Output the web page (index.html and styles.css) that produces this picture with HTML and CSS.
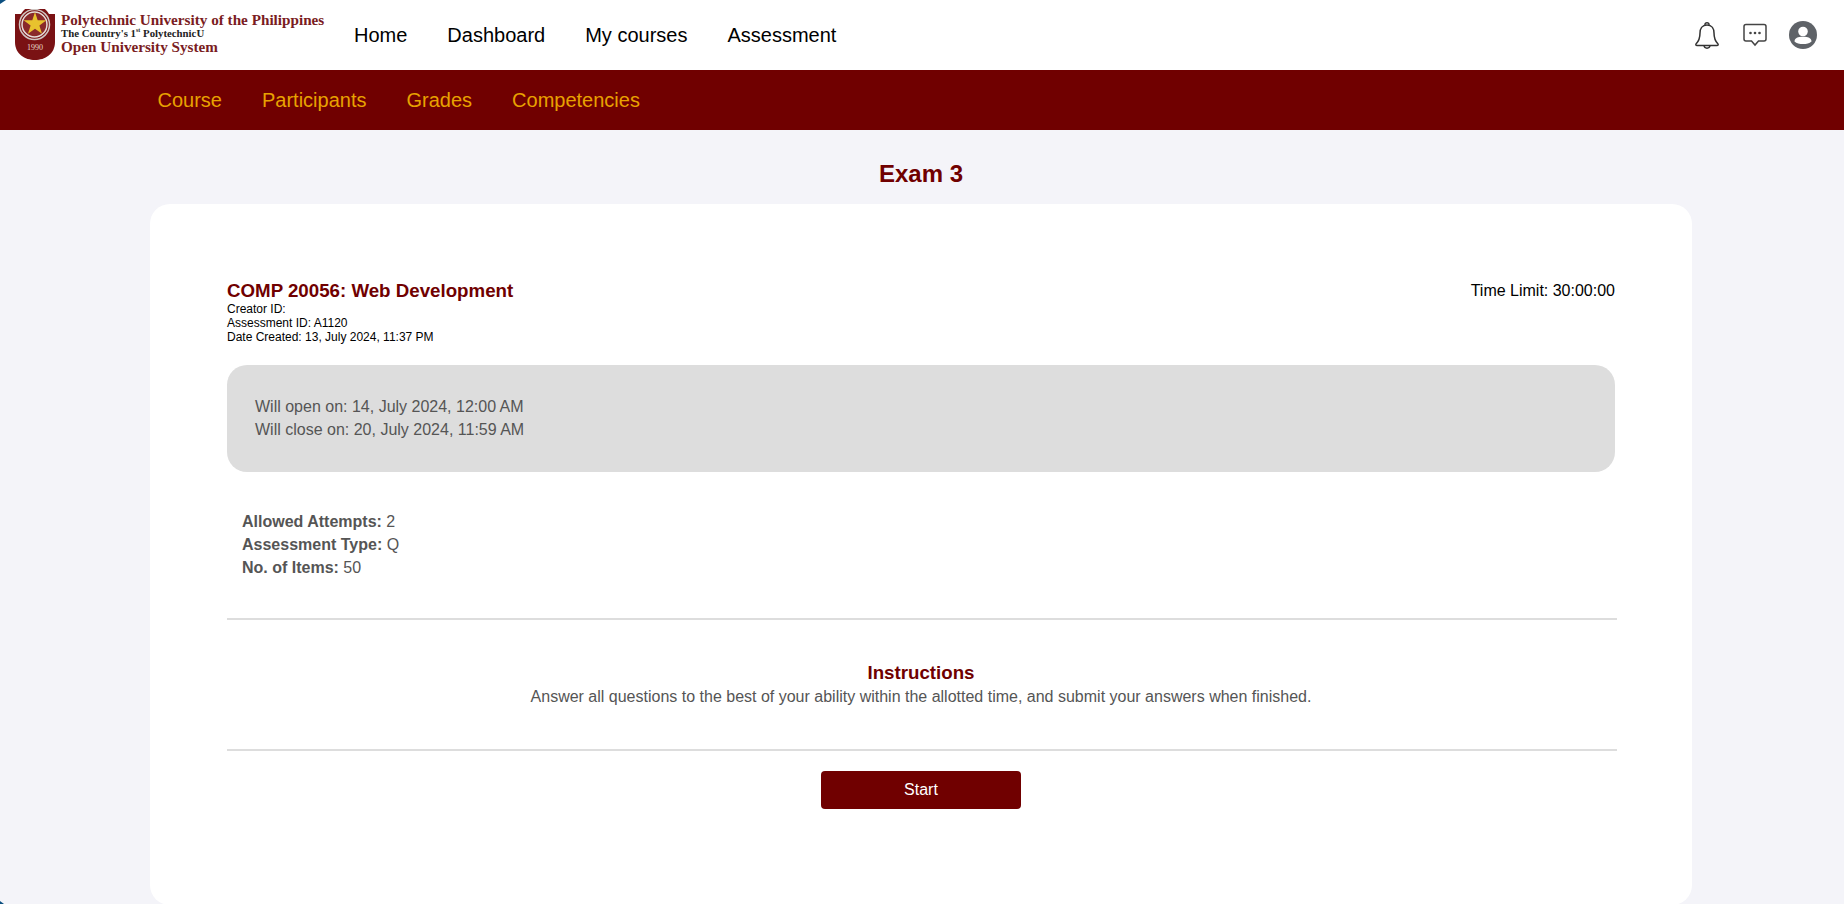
FILE: index.html
```html
<!DOCTYPE html>
<html>
<head>
    <meta charset="UTF-8">
    <meta name="viewport" content="width=device-width, initial-scale=1.0">
    <title>Exam 3</title>
    <link rel="stylesheet" href="styles.css">
</head>
<body>
    <header class="topbar">
        <a href="#" class="brand">
            <svg class="crest" viewBox="0 0 40 52" width="40" height="52" aria-hidden="true">
                <path d="M0 5 H6 A16 16 0 0 1 34 5 H40 V33 C40 45 30 51 20 51 C10 51 0 45 0 33 Z" fill="#7a1214"/>
                <circle cx="19.500" cy="15.500" r="15" fill="#7a1214" stroke="#cfc6c2" stroke-width="1.500"/>
                <circle cx="19.500" cy="15.500" r="12.500" fill="#8a2a2a" stroke="#e6dedb" stroke-width="1.500"/>
                <polygon points="20,3 22.700,11.200 31.400,11.200 24.400,16.400 27,24.800 20,19.700 13,24.800 15.600,16.400 8.600,11.200 17.300,11.200" fill="#e8c22e"/>
                <text x="20" y="41" class="crest-year">1990</text>
            </svg>
            <span class="brand-text">
                <span class="brand-name">Polytechnic University of the Philippines</span>
                <span class="brand-tag">The Country's 1<sup>st</sup> PolytechnicU</span>
                <span class="brand-name">Open University System</span>
            </span>
        </a>
        <nav class="main-nav">
            <a href="#">Home</a>
            <a href="#">Dashboard</a>
            <a href="#">My courses</a>
            <a href="#">Assessment</a>
        </nav>
        <div class="top-icons">
            <svg class="bell" viewBox="0 0 26 28" width="26" height="28" fill="none" stroke="#333" stroke-width="1.500" aria-hidden="true">
                <path d="M13 4 C8 4 6 8 6 12 C6 17 5 20 2 23 C1.500 24 2 24.500 3 24.500 H23 C24 24.500 24.500 24 24 23 C21 20 20 17 20 12 C20 8 18 4 13 4 Z"/>
                <path d="M11 4 C10.500 1 15.500 1 15 4"/>
                <path d="M10 24.500 C10.500 28 15.500 28 16 24.500"/>
            </svg>
            <svg viewBox="0 0 24 24" width="24" height="24" fill="none" stroke="#444" stroke-width="1.500" aria-hidden="true">
                <path d="M3 1.500 H21 C22 1.500 23 2.500 23 3.500 V16 C23 17 22 18 21 18 H15.500 L12 22 L8.500 18 H3 C2 18 1 17 1 16 V3.500 C1 2.500 2 1.500 3 1.500 Z"/>
                <circle cx="7.500" cy="10" r="1.300" fill="#444" stroke="none"/>
                <circle cx="12" cy="10" r="1.300" fill="#444" stroke="none"/>
                <circle cx="16.500" cy="10" r="1.300" fill="#444" stroke="none"/>
            </svg>
            <svg viewBox="0 0 28 28" width="28" height="28" aria-hidden="true">
                <circle cx="14" cy="14" r="14" fill="#5f6368"/>
                <circle cx="14" cy="10.500" r="4.800" fill="#fff"/>
                <path d="M5.500 20.500 C5.500 17 9 15.800 14 15.800 C19 15.800 22.500 17 22.500 20.500 C20.500 22.500 17.500 23 14 23 C10.500 23 7.500 22.500 5.500 20.500 Z" fill="#fff"/>
            </svg>
        </div>
    </header>

    <nav class="sub-nav">
        <a href="#">Course</a>
        <a href="#">Participants</a>
        <a href="#">Grades</a>
        <a href="#">Competencies</a>
    </nav>

    <main class="content">
        <h1 class="page-title">Exam 3</h1>
        <section class="card">
            <div class="exam-head">
                <div>
                    <h2 class="course-name">COMP 20056: Web Development</h2>
                    <div class="meta">
                        <div>Creator ID:</div>
                        <div>Assessment ID: A1120</div>
                        <div>Date Created: 13, July 2024, 11:37 PM</div>
                    </div>
                </div>
                <div class="time-limit">Time Limit: 30:00:00</div>
            </div>

            <div class="schedule">
                <div>Will open on: 14, July 2024, 12:00 AM</div>
                <div>Will close on: 20, July 2024, 11:59 AM</div>
            </div>

            <div class="details">
                <div><b>Allowed Attempts:</b> 2</div>
                <div><b>Assessment Type:</b> Q</div>
                <div><b>No. of Items:</b> 50</div>
            </div>

            <hr class="divider">

            <div class="instructions">
                <h3>Instructions</h3>
                <p>Answer all questions to the best of your ability within the allotted time, and submit your answers when finished.</p>
            </div>

            <hr class="divider">

            <div class="actions">
                <a href="#" class="button">Start</a>
            </div>
        </section>
    </main>
</body>
</html>
```

FILE: styles.css
```css
* {
    box-sizing: border-box;
}
body {
    margin: 0;
    height: 904px;
    overflow: hidden;
    position: relative;
    font-family: "Liberation Sans", Arial, sans-serif;
    background-color: #f4f4f9;
    color: #333;
}
/* bits of the desktop showing through the window corners */
body::before,
body::after {
    content: "";
    position: absolute;
    left: 0;
    background: #0b4f80;
}
body::before {
    top: 0;
    width: 6px;
    height: 4px;
    clip-path: polygon(0 0, 100% 0, 0 100%);
}
body::after {
    bottom: 0;
    width: 4px;
    height: 3px;
    clip-path: polygon(0 0, 0 100%, 100% 100%);
}
a {
    text-decoration: none;
}
.topbar {
    height: 70px;
    background: white;
    display: flex;
    align-items: center;
    padding-left: 15px;
}
.brand {
    display: flex;
    align-items: center;
    gap: 6px;
    width: 339px;
}
.crest-year {
    font-family: "Liberation Serif", serif;
    font-size: 8px;
    fill: #e9d9c9;
    text-anchor: middle;
}
.brand-text {
    display: flex;
    flex-direction: column;
    margin-bottom: 4px;
    font-family: "Liberation Serif", serif;
    font-weight: bold;
}
.brand-name {
    color: #7a1c22;
    font-size: 15.2px;
    line-height: 15px;
    white-space: nowrap;
}
.brand-tag {
    color: #222;
    font-size: 10.8px;
    line-height: 12px;
}
.brand-tag sup {
    font-size: 6px;
    line-height: 0;
}
.main-nav {
    display: flex;
    gap: 40px;
}
.main-nav a {
    color: black;
    font-size: 20px;
}
.top-icons {
    margin-left: auto;
    display: flex;
    align-items: center;
    gap: 22px;
    padding-right: 27px;
}
.bell {
    margin-right: 1px;
}
.sub-nav {
    height: 60px;
    background-color: #700000;
    display: flex;
    align-items: center;
    gap: 40px;
    padding-left: 157.5px;
}
.sub-nav a {
    color: #e8a200;
    font-size: 20px;
}
.content {
    padding: 30px 150px 0;
    width: 1842px;
}
.page-title {
    margin: 0 0 16px;
    text-align: center;
    color: #700000;
    font-size: 24px;
    line-height: 28px;
}
.card {
    background: white;
    height: 701px;
    border-radius: 20px;
    padding: 75px 77px 0;
}
.exam-head {
    display: flex;
    justify-content: space-between;
    color: black;
}
.course-name {
    margin: 0;
    color: #700000;
    font-size: 18.72px;
    line-height: 23px;
}
.meta {
    font-size: 12px;
    line-height: 14px;
}
.time-limit {
    font-size: 16px;
    line-height: 23px;
}
.schedule {
    margin-top: 21px;
    height: 107px;
    background-color: #ddd;
    border-radius: 20px;
    padding: 29.5px 28px;
    color: #555;
    font-size: 16px;
    line-height: 23px;
}
.details {
    margin-top: 38px;
    padding-left: 15px;
    color: #555;
    font-size: 16px;
    line-height: 23px;
}
.divider {
    margin: 39px -2px 0 0;
    border: none;
    border-top: 2px solid #ddd;
}
.instructions {
    margin-top: 41px;
    text-align: center;
    height: 88px;
}
.instructions h3 {
    margin: 0;
    color: #700000;
    font-size: 18.72px;
    line-height: 24px;
}
.instructions p {
    margin: 0;
    color: #555;
    font-size: 16px;
    line-height: 23px;
}
.instructions + .divider {
    margin-top: 0;
}
.actions {
    margin-top: 20px;
    text-align: center;
}
.button {
    display: inline-block;
    width: 200px;
    height: 38px;
    line-height: 38px;
    background-color: #700000;
    color: white;
    font-size: 16px;
    border-radius: 4px;
}
```
